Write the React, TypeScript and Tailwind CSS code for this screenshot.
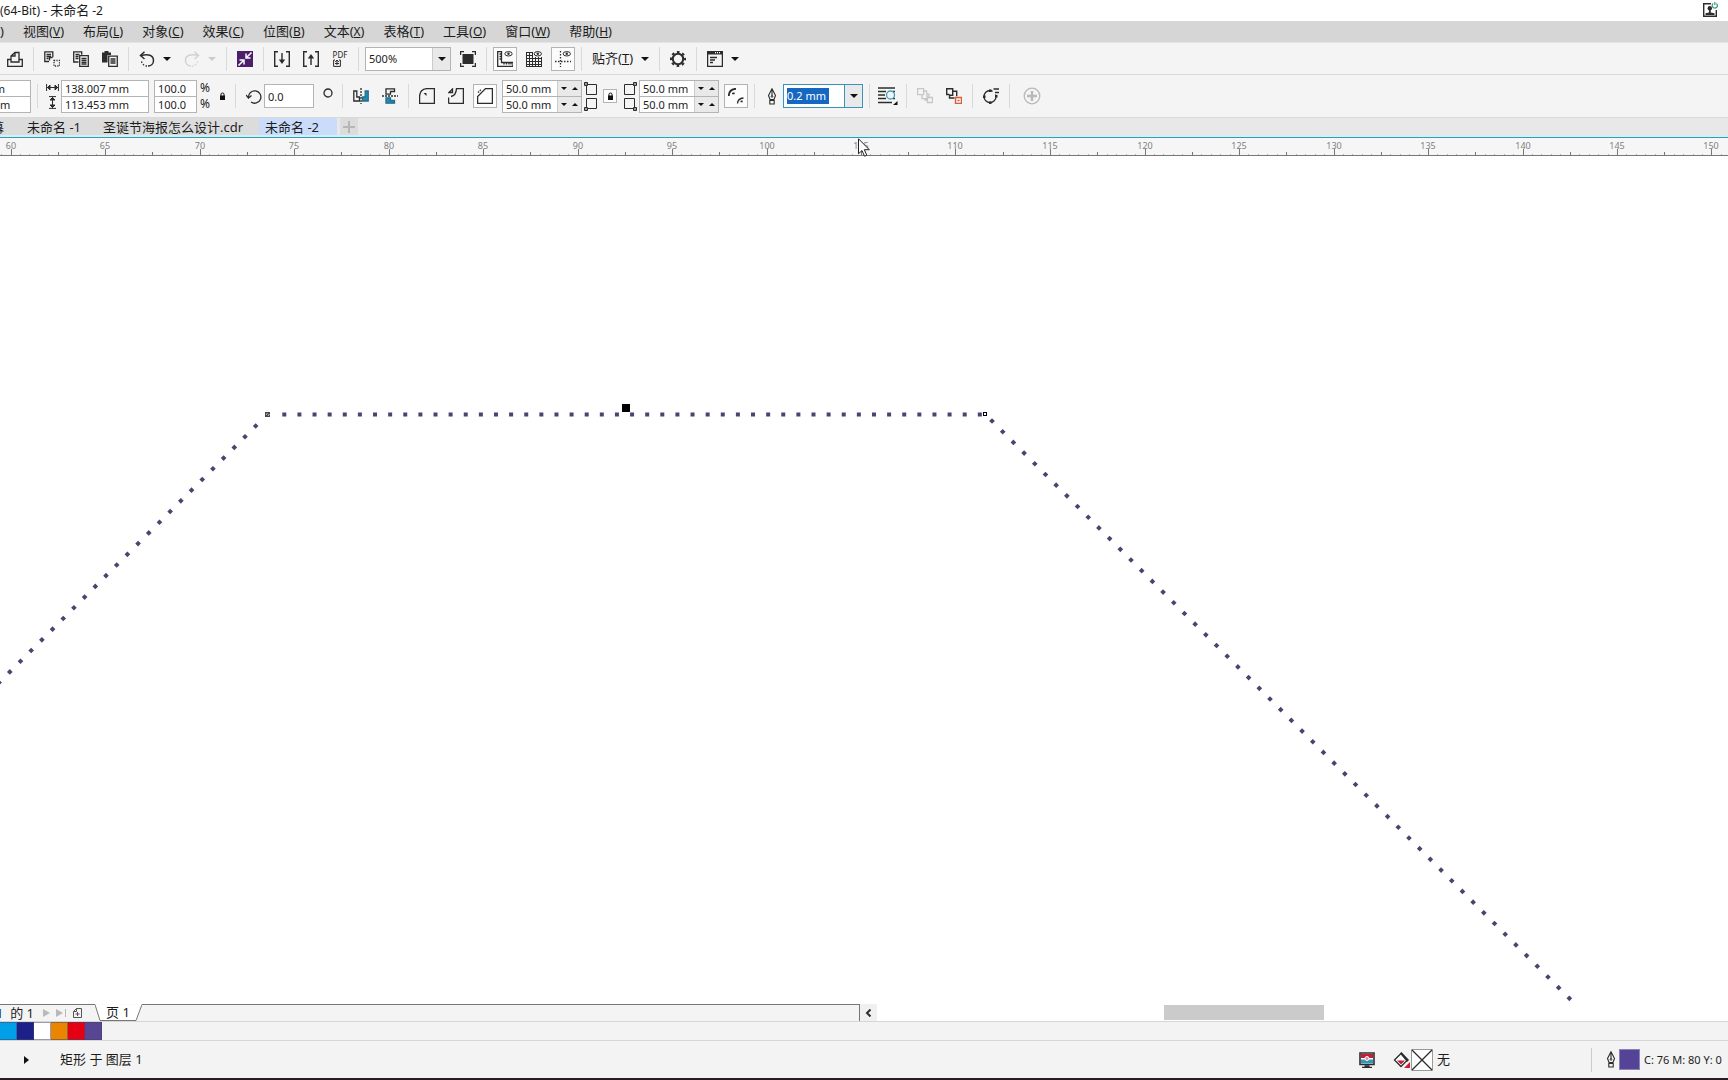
import type { ReactNode } from 'react';

const ink = '#2c2c2c';

const menus = [
    ['视图', 'V'],
    ['布局', 'L'],
    ['对象', 'C'],
    ['效果', 'C'],
    ['位图', 'B'],
    ['文本', 'X'],
    ['表格', 'T'],
    ['工具', 'O'],
    ['窗口', 'W'],
    ['帮助', 'H'],
];

const swatches = [
    { name: '青', cls: 'bg-[#00a0e9]' },
    { name: '深蓝', cls: 'bg-[#1d2088]' },
    { name: '白', cls: 'bg-white' },
    { name: '橙', cls: 'bg-[#ea8500]' },
    { name: '红', cls: 'bg-[#e60014]' },
    { name: '紫', cls: 'bg-[#584695]' },
];

function Icon({ children, w = 16, h = 16 }: { children: ReactNode; w?: number; h?: number }) {
    return (
        <svg width={w} height={h} viewBox={`0 0 ${w} ${h}`} fill="none" stroke={ink} strokeWidth="1.3" className="shrink-0" aria-hidden="true">
            {children}
        </svg>
    );
}

function Tool({ label, on, children }: { label: string; on?: boolean; children: ReactNode }) {
    return (
        <button
            type="button"
            aria-label={label}
            className={
                on
                    ? 'flex size-6 shrink-0 items-center justify-center border border-[#b4b4b4] bg-[#fcfcfc]'
                    : 'flex size-6 shrink-0 items-center justify-center'
            }
        >
            {children}
        </button>
    );
}

function Sep() {
    return <div className="mx-px h-6 w-px shrink-0 bg-[#d9d9d9]" />;
}

function Down({ color = '#111111' }: { color?: string }) {
    return (
        <svg width="8" height="4" viewBox="0 0 8 4" fill={color} className="shrink-0" aria-hidden="true">
            <path d="M0 0h8L4 4z" />
        </svg>
    );
}

function DropButton({ label, color }: { label: string; color?: string }) {
    return (
        <button type="button" aria-label={label} className="flex h-6 w-4 shrink-0 items-center justify-center">
            <Down color={color} />
        </button>
    );
}

function Combo({ label, value, width, active }: { label: string; value: string; width: string; active?: boolean }) {
    return (
        <div className={`flex h-6 shrink-0 border ${width} ${active ? 'border-[#3c93b8]' : 'border-[#b4b4b4]'}`}>
            <div className="flex min-w-0 flex-1 items-center bg-white pl-[3px]">
                {active ? (
                    <input
                        aria-label={label}
                        defaultValue={value}
                        className="h-4 w-[42px] bg-[#1567c2] text-[11px] leading-4 text-white outline-none"
                    />
                ) : (
                    <input aria-label={label} defaultValue={value} className="h-4 w-full min-w-0 text-[11px] leading-4 outline-none" />
                )}
            </div>
            <button
                type="button"
                aria-label={`${label}列表`}
                className={`flex w-[18px] items-center justify-center border-l bg-[#e9e9e9] ${active ? 'border-[#3c93b8]' : 'border-[#cccccc]'}`}
            >
                <Down />
            </button>
        </div>
    );
}

function Pair({ labels, values, width }: { labels: string[]; values: string[]; width: string }) {
    return (
        <div className={`flex h-[33px] shrink-0 flex-col divide-y divide-[#b4b4b4] border border-[#b4b4b4] bg-white ${width}`}>
            {values.map((v, i) => (
                <input key={i} aria-label={labels[i]} defaultValue={v} className="min-h-0 w-full flex-1 pl-[3px] text-[11px] leading-[15px] outline-none" />
            ))}
        </div>
    );
}

function Spinners({ labels }: { labels: string[] }) {
    return (
        <div className="flex h-[33px] w-20 shrink-0 flex-col divide-y divide-[#b4b4b4] border border-[#b4b4b4] bg-white">
            {labels.map((label) => (
                <div key={label} className="flex min-h-0 flex-1">
                    <input aria-label={label} defaultValue="50.0 mm" className="w-[54px] pl-[3px] text-[11px] leading-[15px] outline-none" />
                    <button type="button" aria-label={`${label}减`} className="flex w-3 items-center justify-center border-l border-[#cccccc] bg-[#e9e9e9]">
                        <svg width="6" height="3" viewBox="0 0 6 3" fill="#111111" aria-hidden="true"><path d="M0 0h6L3 3z" /></svg>
                    </button>
                    <button type="button" aria-label={`${label}加`} className="flex w-3 items-center justify-center bg-[#e9e9e9]">
                        <svg width="6" height="3" viewBox="0 0 6 3" fill="#111111" aria-hidden="true"><path d="M0 3h6L3 0z" /></svg>
                    </button>
                </div>
            ))}
        </div>
    );
}

// two stacked squares, each with a knob on one outer corner
function Corners({ side }: { side: 'left' | 'right' }) {
    return (
        <Icon w={14} h={29}>
            {side === 'left' ? (
                <>
                    <path d="M2.500 2.500h10v10h-10zM2.500 16.500h10v10h-10z" strokeWidth="1" />
                    <path d="M.5.500h3v3h-3zM.5 25.500h3v3h-3z" fill="#999999" strokeWidth="1" />
                </>
            ) : (
                <>
                    <path d="M.5 2.500h10v10H.5zM.5 16.500h10v10H.5z" strokeWidth="1" />
                    <path d="M9.500.500h3v3h-3zM9.500 25.500h3v3h-3z" fill="#999999" strokeWidth="1" />
                </>
            )}
        </Icon>
    );
}

function Lock() {
    return (
        <svg width="7" height="8" viewBox="0 0 7 8" fill="#111111" aria-hidden="true">
            <path d="M1 3.500h5V8H1z" />
            <path d="M2 4V2.200Q2 1 3.500 1T5 2.200V4" fill="none" stroke="#111111" />
        </svg>
    );
}

function Pen() {
    return (
        <Icon w={10} h={17}>
            <path d="M5 .8 1.500 7.500 3 11.500h4l1.500-4zM5 1v7M2.800 12.500h4.400v3.500H2.800z" strokeWidth="1.100" />
            <circle cx="5" cy="8.500" r=".8" strokeWidth="1" />
        </Icon>
    );
}

function Eye({ cx }: { cx: number }) {
    return (
        <>
            <ellipse cx={cx} cy="2.800" rx="3.700" ry="2.200" strokeWidth="1" />
            <circle cx={cx} cy="2.800" r="1.200" fill={ink} stroke="none" />
        </>
    );
}

function TitleBar() {
    return (
        <header className="flex h-[21px] shrink-0 items-start justify-between bg-white pr-[10px]">
            <h1 className="text-[13px] leading-5"><span className="text-[12px]">(64-Bit) - </span>未命名<span className="text-[12px]"> -2</span></h1>
            <button type="button" aria-label="登录" className="pt-[2px]">
                <Icon>
                    <path d="M9 1.700H1.700v12.600h12.600V8" strokeWidth="1.400" />
                    <circle cx="7.800" cy="6.200" r="2.200" fill={ink} stroke="none" />
                    <path d="M7 7.500h1.700v3l3.800.8v1.700H3.500v-1.700l3.500-.8z" fill={ink} stroke="none" />
                    <path d="M11.200 1.500a2.600 2.600 0 1 0 3.200 0M12.800 0v3" stroke="#3f9f80" />
                </Icon>
            </button>
        </header>
    );
}

function MenuBar() {
    return (
        <nav className="flex h-[22px] shrink-0 items-start gap-[19px] border-b border-[#e4e4e4] bg-[#d6d6d6] text-[13px] leading-5">
            <span className="w-1 shrink-0">)</span>
            {menus.map(([name, key]) => (
                <button key={name} type="button" className="shrink-0 whitespace-nowrap">
                    {name}(<u className="text-[12px]">{key}</u>)
                </button>
            ))}
        </nav>
    );
}

function StandardBar() {
    return (
        <div role="toolbar" aria-label="标准" className="flex h-[32px] shrink-0 items-center gap-[5px] border-b border-[#d9d9d9] bg-[#f4f4f4] pl-[3px]">
            <Tool label="打印">
                <Icon>
                    <path d="M4 8.500H.7v6.800h14.600V8.500H12M4 11V5l4-3.500h4V11zM4 5h4V1.500" />
                </Icon>
            </Tool>
            <Sep />
            <Tool label="剪切">
                <Icon>
                    <path d="M5 10.500H.8V.8h8v5.500M2.500 3.500h4.500M2.500 5.500h4.500M2.500 7.500h2M5.500 9.500v-3h3" />
                    <path d="M10 9.500h5.500v5.500H10z" strokeDasharray="1.200 1.200" />
                </Icon>
            </Tool>
            <Tool label="复制">
                <Icon>
                    <path d="M5.500 11H.7V.8h8v3M2.500 3.500h4M2.500 5.500h3M2.500 7.500h3" />
                    <path d="M6.700 4.700h8.600v10.600H6.700zM8.500 7.500h5M8.500 9.500h5M8.500 11.500h5M8.500 13.200h5" />
                </Icon>
            </Tool>
            <Tool label="粘贴">
                <Icon>
                    <path d="M0 1.500h2.500V0h4v1.500H9V4H5.500v7.500H0z" fill={ink} stroke="none" />
                    <path d="M6.700 5.200h8.600v10.100H6.700zM8.500 8h5M8.500 10h5M8.500 12h5" />
                </Icon>
            </Tool>
            <Sep />
            <div className="flex">
                <Tool label="撤消">
                    <Icon>
                        <path d="M2 4.500C9 2.500 14.500 4 14.500 9.500 14.500 13 12 15 9 15" strokeWidth="1.500" />
                        <path d="M5.500.800 1.500 4.500 5.500 8" strokeWidth="1.500" />
                        <path d="M8 15a5.500 5.500 0 0 1-5.500-5" strokeDasharray="1.500 1.500" />
                    </Icon>
                </Tool>
                <DropButton label="撤消列表" />
            </div>
            <div className="flex">
                <Tool label="重做">
                    <Icon>
                        <g stroke="#d2d2d2">
                            <path d="M14 4.500C7 2.500 1.500 4 1.500 9.500 1.500 13 4 15 7 15" strokeWidth="1.500" />
                            <path d="M10.500.800l4 3.700L10.500 8" strokeWidth="1.500" />
                            <path d="M8 15a5.500 5.500 0 0 0 5.500-5" strokeDasharray="1.500 1.500" />
                        </g>
                    </Icon>
                </Tool>
                <DropButton label="重做列表" color="#cccccc" />
            </div>
            <Sep />
            <Tool label="搜索内容">
                <Icon>
                    <path d="M0 0h16v16H0z" fill="#4b1f6e" stroke="none" />
                    <path d="M14.500 1.500 10 6M9 2.500V7h4.500M1.500 14.500 6 10M2.500 9H7v4.500" stroke="#ffffff" strokeWidth="1.500" />
                </Icon>
            </Tool>
            <Sep />
            <Tool label="导入">
                <Icon>
                    <path d="M4 .7H.7v14.600H4M12 .7h3.300v14.600H12M8 2v9" strokeWidth="1.400" />
                    <path d="M4.800 8.500h6.400L8 13z" fill={ink} stroke="none" />
                </Icon>
            </Tool>
            <Tool label="导出">
                <Icon>
                    <path d="M4 .7H.7v14.600H4M12 .7h3.300v14.600H12M8 5v9" strokeWidth="1.400" />
                    <path d="M4.800 7.500h6.400L8 3z" fill={ink} stroke="none" />
                </Icon>
            </Tool>
            <Tool label="发布为 PDF">
                <div className="flex flex-col items-start">
                    <span className="text-[8px] leading-2">PDF</span>
                    <Icon w={8} h={8}>
                        <path d="M2 1H.6v6.400h6.800V1H6M4 1v5M2.200 3 4 1l1.800 2M2 4.500h4" strokeWidth="1" />
                    </Icon>
                </div>
            </Tool>
            <Sep />
            <Combo label="缩放级别" value="500%" width="w-[86px]" />
            <Tool label="全屏预览">
                <Icon>
                    <path d="M2.500 3h11v10h-11z" fill={ink} stroke="none" />
                    <path d="M.6 4V.6H4M12 .6h3.400V4M15.400 12v3.400H12M4 15.400H.6V12" />
                </Icon>
            </Tool>
            <Sep />
            <Tool label="显示标尺" on>
                <Icon>
                    <path d="M.7 0v15.300H16M4.500 0v11.500H16v4M.7.600h3.800M2.500 3h2M2.500 5.500h2M2.500 8h2M7 11.500v2M9.500 11.500v2M12 11.500v2M14 11.500v2" />
                    <Eye cx={11.500} />
                </Icon>
            </Tool>
            <Tool label="显示网格">
                <Icon>
                    <path d="M.5 1v15M3.500 1v15M6.500 1v15M9.500 6v10M12.500 6v10M15.500 6v10M0 1.500h7M0 4.500h7M0 7.500h16M0 10.500h16M0 13.500h16M0 15.500h16" strokeWidth="1" />
                    <Eye cx={11.800} />
                </Icon>
            </Tool>
            <Tool label="显示辅助线" on>
                <Icon>
                    <path d="M5.500 0v16M0 10.500h16" strokeDasharray="1.500 1.500" />
                    <Eye cx={11.800} />
                </Icon>
            </Tool>
            <Sep />
            <button type="button" className="flex h-6 w-[65px] shrink-0 items-center justify-between px-1 text-[13px] whitespace-nowrap">
                <span>贴齐(<u>T</u>)</span>
                <Down />
            </button>
            <Sep />
            <Tool label="选项">
                <Icon>
                    <circle cx="8" cy="8" r="5.200" strokeWidth="2" />
                    <circle cx="8" cy="8" r="7" strokeWidth="2" strokeDasharray="2.700 2.800" strokeDashoffset="1.350" />
                </Icon>
            </Tool>
            <Sep />
            <div className="flex">
                <Tool label="应用程序启动器">
                    <Icon>
                        <path d="M.6.600h14.800v14.800H.6z" />
                        <path d="M0 0h16v3.500H0z" fill={ink} stroke="none" />
                        <path d="M3 6.500h7M3 9h5M3 11.500h3" />
                        <path d="M8 1.700h6" stroke="#ffffff" strokeDasharray="1 1" />
                    </Icon>
                </Tool>
                <DropButton label="启动器列表" />
            </div>
        </div>
    );
}

function PropertyBar() {
    return (
        <div role="toolbar" aria-label="属性栏" className="flex h-[43px] shrink-0 items-center gap-[5px] border-b border-[#d9d9d9] bg-[#f4f4f4]">
            <div className="flex h-[33px] w-[31px] shrink-0 flex-col divide-y divide-[#b4b4b4] border border-l-0 border-[#b4b4b4] bg-white text-[11px] leading-[15px]">
                <span className="flex h-4 justify-end pr-[25px]">m</span>
                <span className="flex h-[15px]">m</span>
            </div>
            <Sep />
            <div className="flex shrink-0 items-center">
                <div className="flex w-[17px] flex-col items-center gap-[5px]">
                    <Icon w={13} h={7}>
                        <path d="M.6 0v7M12.400 0v7M1 3.500h11M4 1 1.500 3.500 4 6zM9 1l2.500 2.500L9 6z" strokeWidth="1" fill={ink} />
                    </Icon>
                    <Icon w={7} h={13}>
                        <path d="M0 .6h7M0 12.400h7M3.500 1v11M1 4l2.500-2.500L6 4zM1 9l2.500 2.500L6 9z" strokeWidth="1" fill={ink} />
                    </Icon>
                </div>
                <Pair labels={['宽度', '高度']} values={['138.007 mm', '113.453 mm']} width="w-[88px]" />
            </div>
            <div className="flex shrink-0">
                <Pair labels={['水平缩放', '垂直缩放']} values={['100.0', '100.0']} width="w-[43px]" />
                <div className="flex w-[14px] flex-col pl-[3px] text-[12px] leading-4">
                    <span>%</span>
                    <span>%</span>
                </div>
            </div>
            <button type="button" aria-label="锁定比率" className="flex h-6 w-[13px] shrink-0 items-center justify-center"><Lock /></button>
            <Sep />
            <div className="flex shrink-0 items-center gap-[2px] pl-1">
                <Icon>
                    <path d="M2.500 9.500a6.200 6.200 0 1 1 2.500 4.500" strokeWidth="1.300" />
                    <path d="M0 7 2.500 10 5.500 7.500" strokeWidth="1.300" />
                </Icon>
                <input aria-label="旋转角度" defaultValue="0.0" className="h-6 w-[50px] border border-[#b4b4b4] bg-white pl-[3px] text-[11px] leading-4 outline-none" />
            </div>
            <span className="flex h-6 w-[17px] shrink-0 items-start justify-center pt-1">
                <Icon w={10} h={10}><circle cx="5" cy="5" r="4" /></Icon>
            </span>
            <Sep />
            <Tool label="水平镜像">
                <Icon>
                    <path d="M.8 3h3v6h2.700v4H.8z" />
                    <path d="M8 0v16" strokeDasharray="2 1" />
                    <path d="M15.200 3h-3v6H9.500v4h5.700z" fill="#2c89ab" stroke="#1d6f8e" />
                </Icon>
            </Tool>
            <Tool label="垂直镜像">
                <Icon>
                    <path d="M12.500.800H4v5.400h4.500V3.500h4z" />
                    <path d="M0 8h16" strokeDasharray="2 1" />
                    <path d="M12.500 15.200H4V9.800h4.500v2.700h4z" fill="#2c89ab" stroke="#1d6f8e" />
                </Icon>
            </Tool>
            <Sep />
            <Tool label="圆角">
                <Icon>
                    <path d="M.6 15.400V8Q1 1 8 .6h7.400v14.800z" />
                    <path d="M4.500 5h3v3z" fill={ink} stroke="none" />
                </Icon>
            </Tool>
            <Tool label="扇形角">
                <Icon>
                    <path d="M.6 15.400h14.800V.6H8.500Q8 7.500 3 8.500" />
                    <path d="M.6 15.400V9.500M1 4.500h3.500V1z" />
                </Icon>
            </Tool>
            <Tool label="倒棱角" on>
                <Icon>
                    <path d="M.6 15.400V8.500L8.500.6h6.900v14.800z" />
                    <path d="M1 4.500 4.500 1" strokeDasharray="1.500 1" />
                </Icon>
            </Tool>
            <Spinners labels={['左上角半径', '左下角半径']} />
            <div className="-ml-[3px] flex shrink-0"><Corners side="left" /></div>
            <button type="button" aria-label="同时编辑所有角" className="flex h-[14px] w-[14px] shrink-0 items-center justify-center border border-[#b4b4b4] bg-white"><Lock /></button>
            <div className="flex shrink-0 items-center gap-px pl-[2px]">
                <Corners side="right" />
                <Spinners labels={['右上角半径', '右下角半径']} />
            </div>
            <Tool label="相对角缩放" on>
                <Icon>
                    <path d="M.8 8Q1 1 8 .8" strokeWidth="1.800" />
                    <path d="M4 5.500h2v-1" />
                    <path d="M9.500 15.500q.2-5 6-5.500M12.500 13.500h1.500v-1" />
                </Icon>
            </Tool>
            <Sep />
            <div className="flex shrink-0 items-center">
                <span className="flex w-[22px] justify-center"><Pen /></span>
                <Combo label="轮廓宽度" value="0.2 mm" width="w-20" active />
            </div>
            <Sep />
            <Tool label="文本换行">
                <Icon w={20} h={18}>
                    <path d="M0 1h17M0 4.500h8M0 8h7M0 11.500h8M15 4.500h2M15 11.500h2M0 15.500h14" strokeWidth="1.500" />
                    <circle cx="12.500" cy="8" r="4" stroke="#3f9fc4" />
                    <path d="M19.500 14v4H15z" fill="#111111" stroke="none" />
                </Icon>
            </Tool>
            <Sep />
            <Tool label="到图层前面">
                <Icon>
                    <g stroke="#c6c6c6">
                        <path d="M.6.600h6v6h-6zM6.600 3h3v3M5 6.600v4h5v-4.500h2v3M10.500 9.500h5v5h-5zM10 12H8v-1.500" />
                    </g>
                </Icon>
            </Tool>
            <Tool label="到图层后面">
                <Icon>
                    <path d="M3.500 6.500H.7V.7h6v2.500h4v5M3.500 6.500V10H8.500M6.700 3.200v4H4" strokeWidth="1.400" />
                    <path d="M9.500 9.500h6v6h-6z" stroke="#dd5b36" strokeWidth="1.400" />
                    <path d="M11.500 12.500h2" stroke="#dd5b36" />
                </Icon>
            </Tool>
            <Sep />
            <Tool label="转换为曲线">
                <Icon>
                    <circle cx="7" cy="8.500" r="6" />
                    <path d="M9.500 0H16v6.500H9.500z" fill="#f4f4f4" stroke="none" />
                    <path d="M10.500 1h5.500M12 4.500h4" />
                    <path d="M0 7.500h2.500V10H0zM6 1.500h2.500V4H6zM6 13.500h2.500V16H6zM12 7h2.500v2.500H12z" fill={ink} stroke="none" />
                </Icon>
            </Tool>
            <Sep />
            <button type="button" aria-label="快速自定义" className="ml-1 flex size-6 shrink-0 items-center justify-center">
                <Icon w={18} h={18}>
                    <g stroke="#b9b9b9">
                        <circle cx="9" cy="9" r="7.800" />
                        <path d="M9 4v10M4 9h10" strokeWidth="2.400" />
                    </g>
                </Icon>
            </button>
        </div>
    );
}

function FileTabs() {
    return (
        <div role="tablist" className="flex h-5 shrink-0 items-start border-b border-[#3f97ab] bg-[#e8e8e8] text-[13px] leading-[18px] shadow-[inset_0_-2px_0_#cdf3fa]">
            <button type="button" role="tab" className="flex h-[17px] w-[17px] shrink-0 justify-end overflow-hidden bg-[#dcdcdc] pr-[13px]">幕</button>
            <button type="button" role="tab" className="h-[17px] w-[79px] shrink-0 bg-[#dcdcdc] pl-[10px] text-left whitespace-nowrap">未命名 -1</button>
            <button type="button" role="tab" className="h-[17px] w-[163px] shrink-0 bg-[#dcdcdc] pl-[7px] text-left whitespace-nowrap">圣诞节海报怎么设计.cdr</button>
            <button type="button" role="tab" aria-selected="true" className="h-[17px] w-[78px] shrink-0 bg-[#cbdcfb] pl-[6px] text-left whitespace-nowrap">未命名 -2</button>
            <button type="button" aria-label="新建文档" className="ml-[3px] flex h-[17px] w-[18px] shrink-0 items-center justify-center bg-[#dcdcdc]">
                <Icon w={12} h={12}><path d="M6 0v12M0 6h12" stroke="#b6b6b6" strokeWidth="2" /></Icon>
            </button>
        </div>
    );
}

// half-millimetre ticks, a number every 5 mm
function Ruler() {
    const start = 10.5;
    const step = 9.45;
    const ticks = Array.from({ length: 340 }, (_, i) => i - 1);
    const numbers = Array.from({ length: 19 }, (_, i) => i * 10);
    return (
        <div className="h-[18px] shrink-0 border-b border-[#777777] bg-[#f6f6f6]">
            <svg className="h-full w-full" aria-hidden="true">
                {ticks.map((i) => {
                    const x = Math.round(start + i * step);
                    const h = i % 10 === 0 ? 6 : i % 5 === 0 ? 3 : 1;
                    return <rect key={i} x={x} y={17 - h} width="1" height={h} fill={h === 1 ? '#b5b5b5' : '#777777'} />;
                })}
                {numbers.map((i) => (
                    <text key={i} x={Math.round(start + i * step)} y="11" textAnchor="middle" fontSize="9" fill="#808080">
                        {60 + i / 2}
                    </text>
                ))}
            </svg>
        </div>
    );
}

function Canvas() {
    return (
        <main className="min-h-0 flex-1 overflow-hidden bg-white">
            <svg className="h-full w-full" aria-label="绘图窗口">
                <g stroke="#4a4570" strokeWidth="4" strokeDasharray="4 11.120" fill="none">
                    <path d="M282.300 258.500H984" />
                    <path d="M990.600 263.600 1571 844" />
                    <path d="M257.100 268.600-4 529.700" />
                </g>
                <rect x="622" y="248" width="8" height="8" fill="#000000" />
                <rect x="983.500" y="256.500" width="3" height="3" fill="#ffffff" stroke="#000000" />
                <rect x="265" y="256" width="5" height="5" fill="#444444" />
                <path d="M266 259l1.500-2M268 260l1.500-2" stroke="#cccccc" />
            </svg>
        </main>
    );
}

function PageBar() {
    return (
        <div className="flex h-[18px] shrink-0 border-b border-[#d6d6d6] bg-white text-[13px] leading-4">
            <div className="flex w-[860px] shrink-0 border-r border-[#777777] bg-[#f4f4f4]">
                <div className="flex w-[95px] shrink-0 items-center border-t border-[#777777]">
                    <span className="flex w-[39px] justify-end pr-[5px] whitespace-pre">1  的 1</span>
                    <button type="button" aria-label="下一页" className="flex w-[15px] justify-center">
                        <svg width="7" height="8" viewBox="0 0 7 8" fill="#b9b9b9" aria-hidden="true"><path d="M0 0l7 4-7 4z" /></svg>
                    </button>
                    <button type="button" aria-label="最后一页" className="flex w-[15px] justify-center">
                        <svg width="11" height="8" viewBox="0 0 11 8" fill="#b9b9b9" aria-hidden="true"><path d="M0 0l7 4-7 4zM9 0h1v8H9z" /></svg>
                    </button>
                    <button type="button" aria-label="添加页面" className="flex w-[17px] justify-center">
                        <Icon w={9} h={10}><path d="M3.500.5h5v9h-8v-6zM3.500.5v3h-3M4.500 4v4M2.500 6h4" stroke="#555555" strokeWidth="1" /></Icon>
                    </button>
                </div>
                <button type="button" className="relative flex w-[47px] shrink-0 items-start pl-[11px] whitespace-nowrap">
                    <svg width="47" height="17" viewBox="0 0 47 17" className="absolute inset-0" aria-hidden="true">
                        <path d="M0 .5 5 16.500H41L47 .5" fill="#ffffff" stroke="#777777" />
                    </svg>
                    <span className="relative">页 1</span>
                </button>
                <div className="flex-1 border-t border-[#777777]" />
            </div>
            <button type="button" aria-label="向左滚动" className="flex w-[17px] shrink-0 items-center justify-center bg-[#f0f0f0]">
                <Icon w={7} h={8}><path d="M5.500.5 2 4l3.500 3.500" strokeWidth="2" /></Icon>
            </button>
            <div className="flex flex-1 items-end pb-px pl-[287px]">
                <div className="h-[15px] w-[160px] bg-[#cbcbcb]" />
            </div>
        </div>
    );
}

function Palette() {
    return (
        <div className="flex h-[19px] shrink-0 border-b border-[#d6d6d6] bg-[#f3f3f3]">
            {swatches.map((s) => (
                <button key={s.name} type="button" aria-label={s.name} className={`h-[18px] w-[17px] shrink-0 border-y border-r border-[#44446688] ${s.cls}`} />
            ))}
        </div>
    );
}

function StatusBar() {
    return (
        <footer className="flex h-[39px] shrink-0 items-center border-b-2 border-[#2a1c24] bg-[#f3f3f3] text-[13px]">
            <button type="button" aria-label="展开" className="ml-6">
                <svg width="5" height="8" viewBox="0 0 5 8" fill="#111111" aria-hidden="true"><path d="M0 0l5 4-5 4z" /></svg>
            </button>
            <span className="ml-[31px] flex-1 whitespace-nowrap">矩形 于 图层 1</span>
            <button type="button" aria-label="颜色校样" className="mr-[18px]">
                <Icon>
                    <path d="M1 1h14v11.500H1z" fill="#ffffff" strokeWidth="1.600" />
                    <path d="M2 2h12v4H2z" fill="#c01f3a" stroke="none" />
                    <path d="M2 7.500h12v4H2z" fill="#3296bb" stroke="none" />
                    <circle cx="8" cy="6.500" r="2" fill="#e58a98" stroke="#ffffff" strokeWidth="1" />
                    <path d="M5.500 14h5M3 15.500h10" />
                </Icon>
            </button>
            <div className="flex w-[198px] shrink-0 items-center">
                <Icon w={18} h={18}>
                    <path d="M1.500 9 8 2.500l6.500 6.500L8 15.500z" fill="#ffffff" />
                    <path d="M7 2.500 8.500 1 16 9l-2 2z" fill={ink} stroke="none" />
                    <path d="M4 9.500h8L8 13.500z" fill="#c81e35" stroke="none" />
                    <path d="M17 11v6h-6z" fill="#c81e35" stroke="none" />
                </Icon>
                <Icon w={22} h={22}>
                    <path d="M.5.500h21v21H.5z" fill="#ffffff" stroke="#999999" strokeWidth="1" />
                    <path d="M1 1l20 20M21 1 1 21" />
                </Icon>
                <span className="ml-1">无</span>
            </div>
            <div className="flex w-[137px] shrink-0 items-center border-l border-[#cccccc] pl-[14px]">
                <Pen />
                <span className="ml-[3px] size-[21px] shrink-0 border border-[#8b82b5] bg-[#544396]" />
                <span className="ml-1 text-[11px] leading-6 whitespace-nowrap">C: 76 M: 80 Y: 0</span>
            </div>
        </footer>
    );
}

export default function App() {
    return (
        <div className="relative flex h-screen flex-col overflow-hidden bg-[#f4f4f4] font-['Noto_Sans','Noto_Sans_CJK_SC',sans-serif] text-[#1c1c1c]">
            <TitleBar />
            <MenuBar />
            <StandardBar />
            <PropertyBar />
            <FileTabs />
            <Ruler />
            <Canvas />
            <PageBar />
            <Palette />
            <StatusBar />
            {/* mouse pointer */}
            <svg width="12" height="19" viewBox="0 0 12 19" className="absolute top-[138px] left-[858px]" aria-hidden="true">
                <path d="M.5.800v15l3.500-3.300 2.500 5.700 2.300-1-2.500-5.500h5z" fill="#ffffff" stroke="#222222" />
            </svg>
        </div>
    );
}
